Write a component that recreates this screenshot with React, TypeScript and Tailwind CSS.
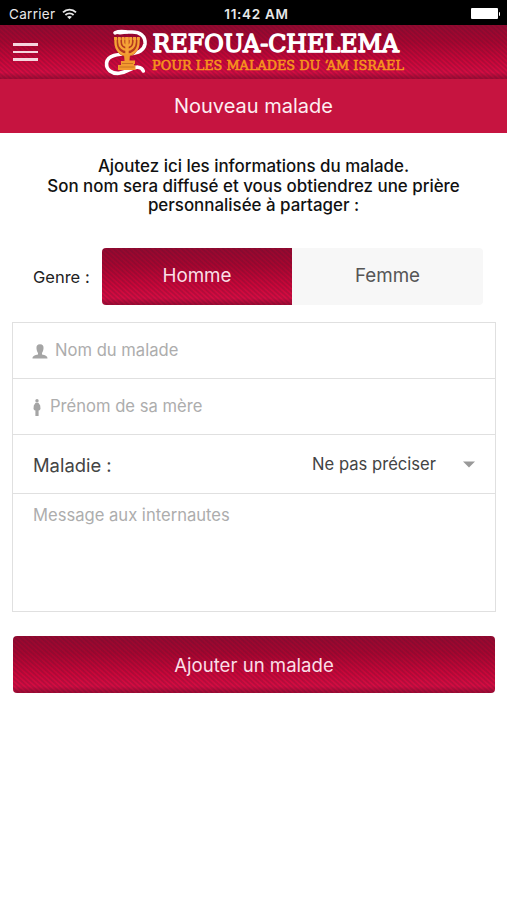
import clsx from 'clsx';

const STRIPES =
  'bg-[repeating-linear-gradient(42deg,rgba(80,20,50,0.24)_0px,rgba(80,20,50,0.24)_0.9px,transparent_1.9px,transparent_2.5px,rgba(80,20,50,0.24)_3.5px),linear-gradient(to_bottom,#96082f_0%,#a8052f_30%,#cb0639_66%,#d60c42_88%,#a50a34_98%,#a50a34_100%)]';

function StatusBar() {
  return (
    <div className="grid h-[25px] grid-cols-3 items-center bg-black pt-[3px] text-[13.5px] text-[#e8e8e8]">
      <div className="flex items-center gap-[7px] pl-[9px]">
        <span className="tracking-[0.3px]">Carrier</span>
        <svg width="15" height="12" viewBox="0 0 15 12" fill="none" stroke="currentColor" strokeWidth="1.8">
          <path d="M1 4.4C4.6 0.7 10.4 0.7 14 4.4" />
          <path d="M3.4 7C5.7 4.7 9.3 4.7 11.6 7" />
          <path d="M7.5 11.3 5.1 8.8C6.4 7.6 8.6 7.6 9.9 8.8Z" fill="currentColor" stroke="none" />
        </svg>
      </div>
      <span className="pl-1.5 text-center font-semibold tracking-[0.7px]">11:42 AM</span>
      <div className="flex items-center justify-end pr-[7px] pb-px">
        <span className="h-[11px] w-[27px] rounded-[1px] bg-white" />
        <span className="ml-px h-1 w-[1.5px] rounded-r bg-white" />
      </div>
    </div>
  );
}

function Logo() {
  return (
    <svg className="ml-[66px] shrink-0 overflow-visible" width="304" height="52" viewBox="0 0 304 52">
      {/* snake */}
      <path
        d="M11 6.8C17 4 21 6.4 27 6C36 5.6 41.8 10 41 18C39.8 25 33 27.5 25 27.8C14 28.2 3.5 29 2.6 37C2 44 8 47.8 15 47.3C24 46.5 28 40.5 34 41.2C37 41.6 38.6 43 39.3 45"
        fill="none"
        stroke="#fff"
        strokeWidth="3.6"
        strokeLinecap="round"
      />
      <path d="M10 7.5 14 4.5 22 4 24 7.5 16 8.5Z" fill="#fff" />
      {/* menorah */}
      <path d="M10.5 12H35.5V17C35.5 24 30 29.5 25.5 30.5H20.5C16 29.5 10.5 24 10.5 17Z" fill="#b3381f" />
      <g fill="none" stroke="#f5a236" strokeWidth="2.3">
        <path d="M11.5 12V16C11.5 33 34.5 33 34.5 16V12" />
        <path d="M15.3 12V16C15.3 26.5 30.7 26.5 30.7 16V12" />
        <path d="M19.2 12V16C19.2 21 26.8 21 26.8 16V12" />
        <path d="M23 11V40" strokeWidth="3.4" />
        <path d="M10 12.5H36" strokeWidth="2.8" strokeDasharray="3 0.8" />
      </g>
      <path d="M20 28H26L25.5 34.5H31V38H30V39.5H31.5V44H14V39H17V35H20.5Z" fill="#f29a2e" />
      <path d="M18 37.5H29M15.5 41H30.5" stroke="#c06a22" strokeWidth="0.8" />
      <g fontFamily="'DejaVu Serif', serif" strokeLinejoin="round">
        <text x="48.5" y="26" fontSize="23.6" fill="#fff" stroke="#fff" strokeWidth="1.4" textLength="246.5" lengthAdjust="spacingAndGlyphs">
          REFOUA-CHELEMA
        </text>
        <text x="48" y="43.6" fontSize="13.2" fill="#f7941d" stroke="#f7941d" strokeWidth="0.6" textLength="252" lengthAdjust="spacingAndGlyphs">
          POUR LES MALADES DU ‘AM ISRAEL
        </text>
      </g>
    </svg>
  );
}

function Header() {
  return (
    <header>
      <div className={clsx('flex h-[54px] items-center pl-[13px]', STRIPES)}>
        <button className="flex w-[25px] shrink-0 flex-col gap-[5px]" aria-label="Menu">
          <span className="h-[2.5px] bg-[#f6d5de]" />
          <span className="h-[2.5px] bg-[#f6d5de]" />
          <span className="h-[2.5px] bg-[#f6d5de]" />
        </button>
        <Logo />
      </div>
      <h1 className="flex h-[54px] items-center justify-center bg-[#c61440] text-[20px] text-[#fdeef2]">
        Nouveau malade
      </h1>
    </header>
  );
}

function GenderSwitch() {
  return (
    <div className="mt-[32.5px] flex h-[57px] items-center pr-6 pl-[33px]">
      <span className="w-[69px] shrink-0 pt-px text-[16.5px] text-[#222]">Genre :</span>
      <button className={clsx('h-full w-[190px] rounded-l-[4px] text-[18.8px] text-[#fbdfe7]', STRIPES)}>
        Homme
      </button>
      <button className="h-full flex-1 rounded-r-[4px] bg-[#f7f7f7] text-[18.8px] text-[#555]">Femme</button>
    </div>
  );
}

function PatientForm() {
  return (
    <div className="mr-[11px] ml-3 mt-[17px] flex h-[290px] flex-col divide-y-[1.5px] divide-[#e0e0e0] border-[1.5px] border-[#e0e0e0] text-[16.6px] text-[#adadad]">
      <div className="flex h-[56px] items-center gap-[7px] pl-[19px]">
        <svg className="mt-0.5" width="16" height="15" viewBox="0 0 16 15" fill="#a5a5a5">
          <path d="M8 0.3C10.8 0.3 11.8 2 11.5 4.4C11.3 6.6 10.6 8 10 9V10.5C12.8 11.2 15.5 11.6 15.5 14.6H0.5C0.5 11.6 3.2 11.2 6 10.5V9C5.4 8 4.7 6.6 4.5 4.4C4.2 2 5.2 0.3 8 0.3Z" />
        </svg>
        <span className="pb-px">Nom du malade</span>
      </div>
      <div className="flex h-[56px] items-center gap-[9px] pl-[20px]">
        <svg className="mt-0.5" width="8" height="17" viewBox="0 0 8 17" fill="#a5a5a5">
          <circle cx="4" cy="1.8" r="1.7" />
          <path d="M2.6 3.8H5.4L7.2 6.5 7.5 10 6.6 11.2 5.6 11.5V17H2.4V11.5L1.4 11.2 0.5 10 0.8 6.5Z" />
        </svg>
        <span className="pb-px">Prénom de sa mère</span>
      </div>
      <div className="flex h-[59px] items-center pr-5 pl-5">
        <span className="pt-1 text-[18.4px] text-[#444]">Maladie :</span>
        <span className="ml-auto text-[16.6px] text-[#444]">Ne pas préciser</span>
        <svg className="ml-[27px]" width="12" height="7" viewBox="0 0 12 7" fill="#999">
          <path d="M0 0.5H12L6 6.5Z" />
        </svg>
      </div>
      <div className="flex-1 pt-[9px] pl-5">Message aux internautes</div>
    </div>
  );
}

export default function App() {
  return (
    <div className="flex h-[900px] w-[507px] flex-col overflow-hidden bg-white font-['Inter',sans-serif]">
      <StatusBar />
      <Header />
      <p className="mt-6 text-center text-[16.9px] leading-[19.5px] font-medium text-[#111]">
        Ajoutez ici les informations du malade.
        <br />
        Son nom sera diffusé et vous obtiendrez une prière
        <br />
        personnalisée à partager :
      </p>
      <GenderSwitch />
      <PatientForm />
      <button className={clsx('mr-3 ml-[13px] mt-6 h-[57px] rounded-[4px] pt-[3px] text-[18.6px] text-[#fbdfe7]', STRIPES)}>
        Ajouter un malade
      </button>
    </div>
  );
}
